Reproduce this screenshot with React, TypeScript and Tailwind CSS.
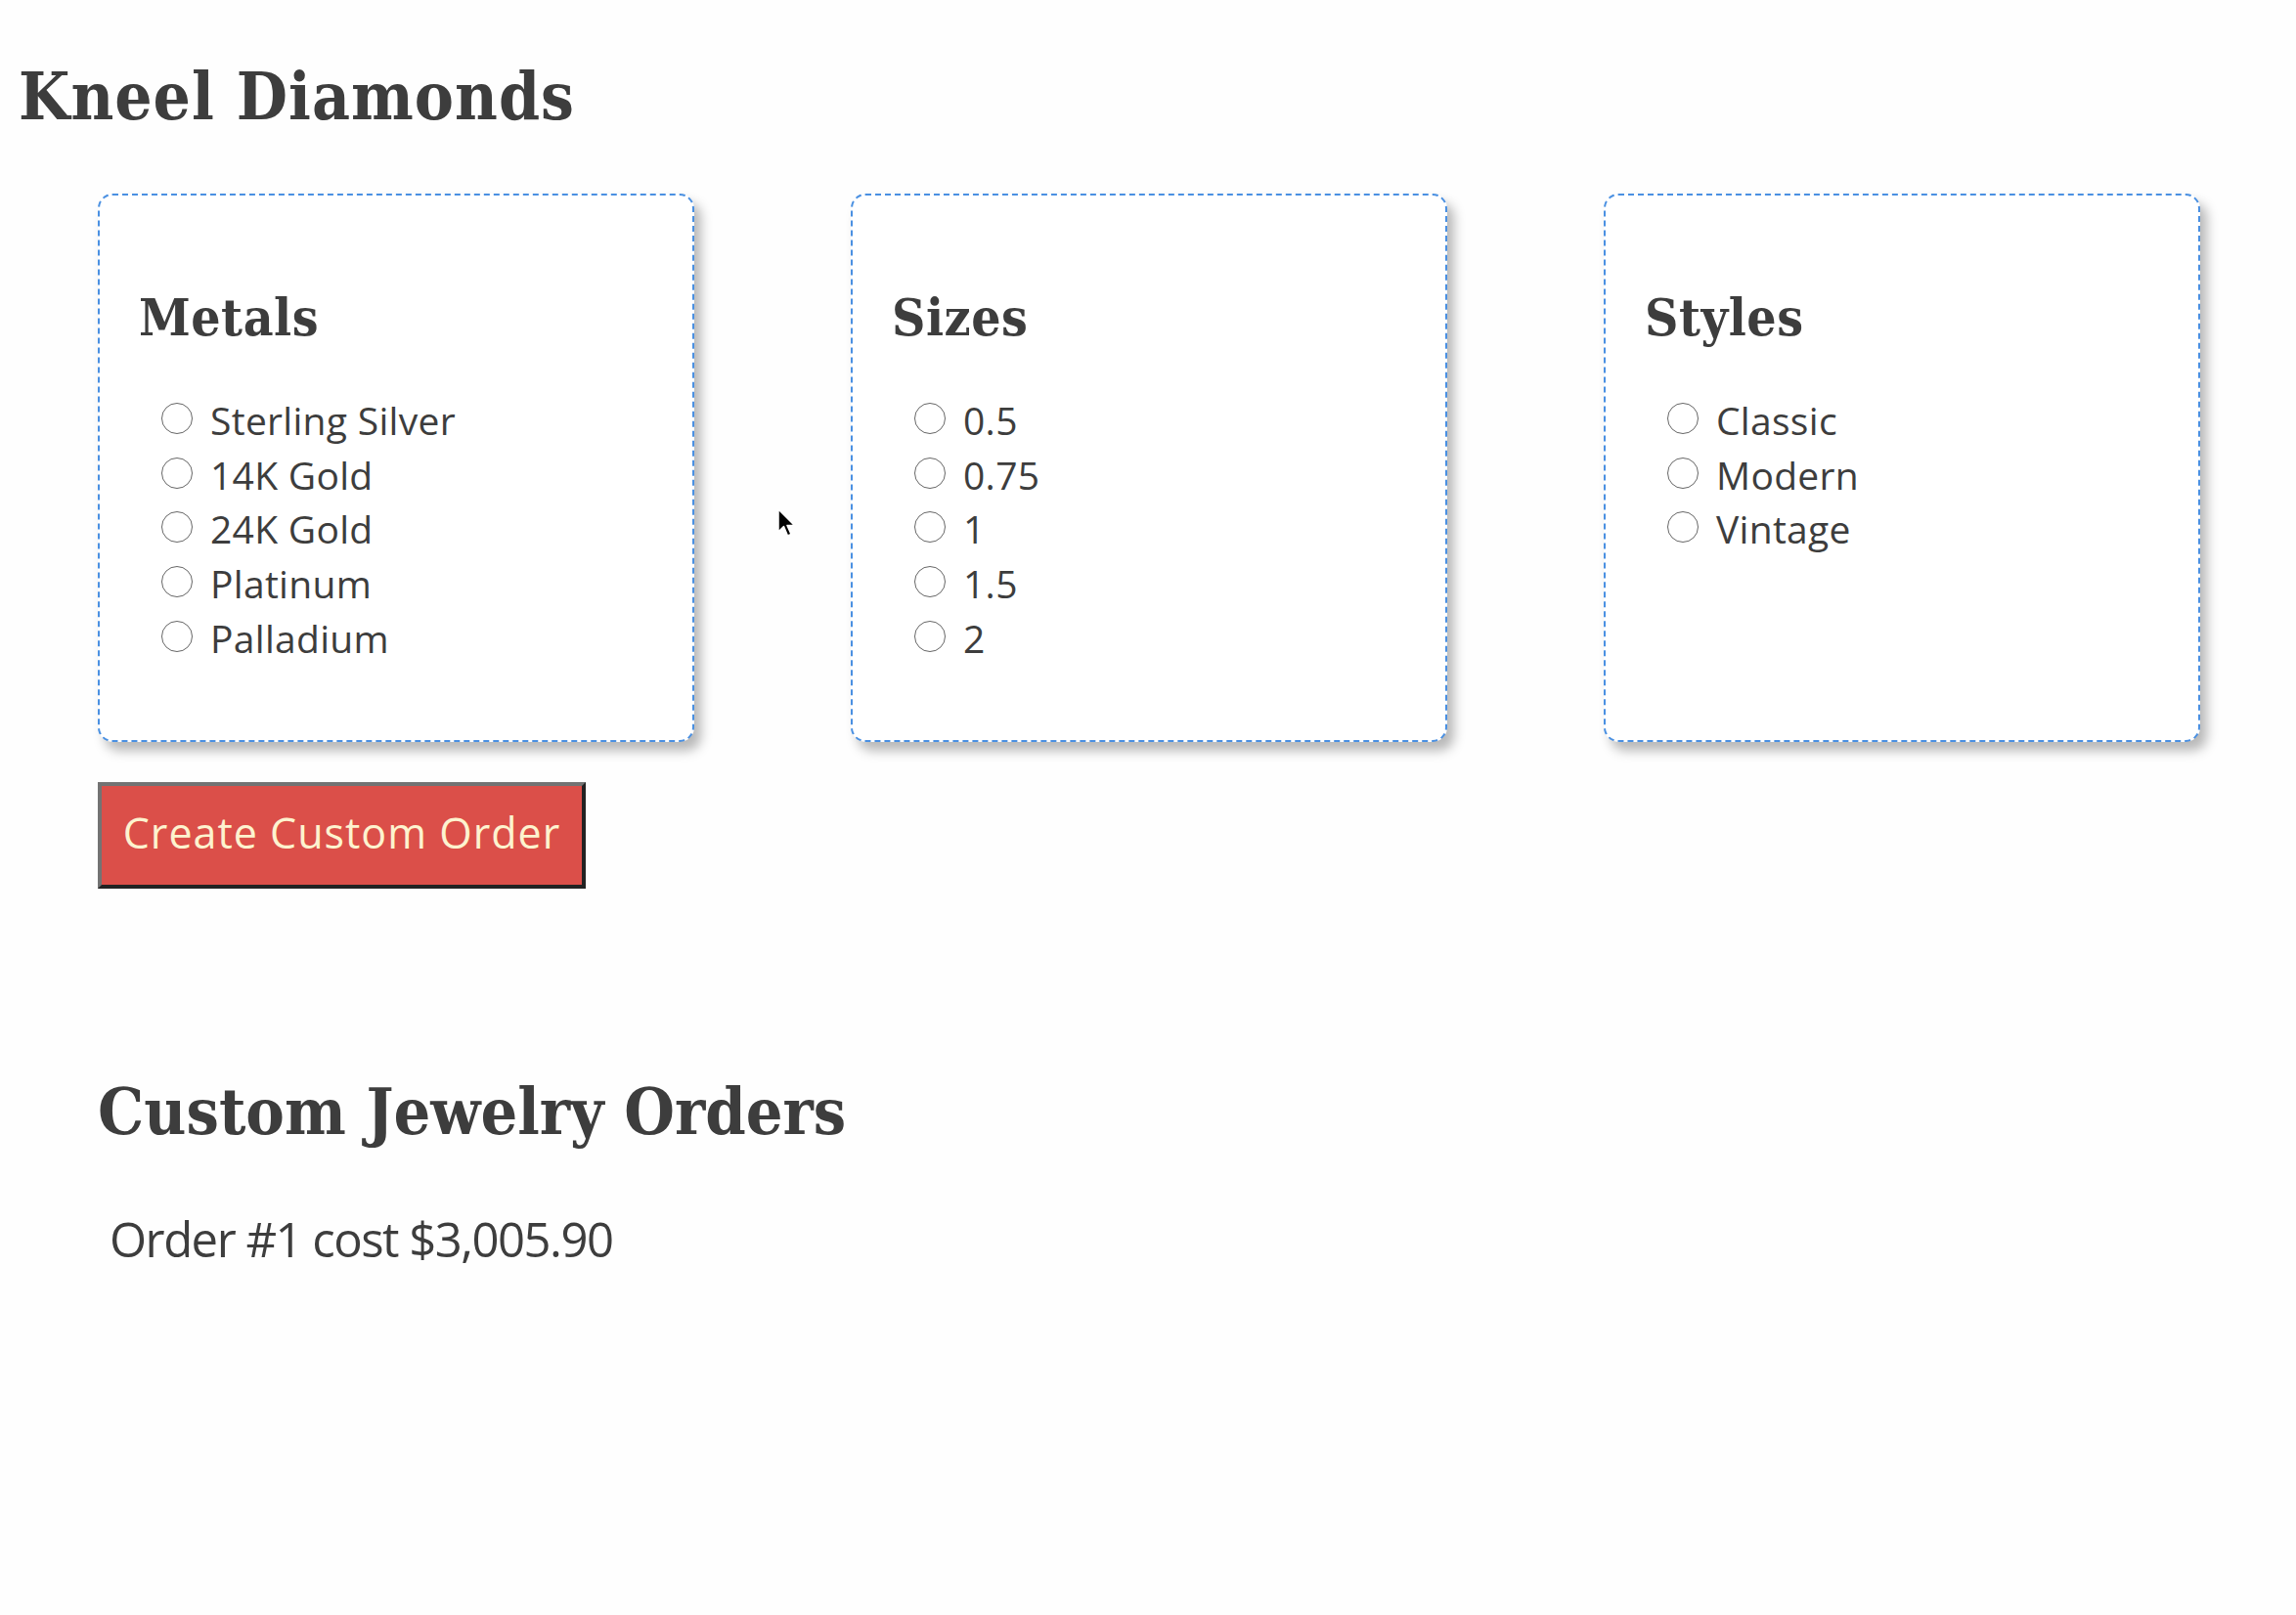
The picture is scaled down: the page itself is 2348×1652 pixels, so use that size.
import React from "react";

const serif = { fontFamily: '"DejaVu Serif Condensed", "DejaVu Serif", serif', fontStretch: "condensed" as const };
const sans = { fontFamily: '"Open Sans", "Noto Sans", sans-serif' };

function Radio({ label, name }: { label: string; name: string }) {
  return (
    <label className="flex items-center h-[55.7px] gap-[18px] cursor-default">
      <input
        type="radio"
        name={name}
        className="appearance-none w-[32px] h-[32px] rounded-full border-[1.5px] border-[#666666] bg-white shrink-0 m-0"
      />
      <span className="pt-[3px] text-[39px] leading-none tracking-[0.3px] text-[#3d3d3d]" style={sans}>
        {label}
      </span>
    </label>
  );
}

function Card({ title, items, name }: { title: string; items: string[]; name: string }) {
  return (
    <div className="w-[610px] h-[561px] rounded-[15px] border-2 border-dashed border-[#4a90e2] bg-white shadow-[7px_9px_12px_rgba(0,0,0,0.28)] pt-[98px] pl-[40px]">
      <h2 className="text-[53px] leading-none font-bold tracking-[0.5px] text-[#3d3d3d]" style={serif}>
        {title}
      </h2>
      <div className="mt-[49px] pl-[23px] flex flex-col">
        {items.map((it) => (
          <Radio key={it} label={it} name={name} />
        ))}
      </div>
    </div>
  );
}

export default function App() {
  return (
    <div className="relative min-h-[1652px] w-full bg-[#fefefe] text-[#3d3d3d]">
      <h1 className="pt-[65px] pl-[19px] text-[67px] leading-none font-bold tracking-[1px] text-[#3d3d3d]" style={serif}>
        Kneel Diamonds
      </h1>
      <div className="pl-[100px] pt-[66px]">
        <div className="flex gap-[160px]">
          <Card title="Metals" name="metal" items={["Sterling Silver", "14K Gold", "24K Gold", "Platinum", "Palladium"]} />
          <Card title="Sizes" name="size" items={["0.5", "0.75", "1", "1.5", "2"]} />
          <Card title="Styles" name="style" items={["Classic", "Modern", "Vintage"]} />
        </div>
        <button
          className="mt-[41px] w-[499px] h-[109px] pb-[6px] bg-[#db4f49] border-4 border-t-[#737373] border-l-[#737373] border-b-[#222222] border-r-[#222222] text-[43px] leading-none tracking-[1px] text-[#fdf3cf] text-center"
          style={sans}
        >
          Create Custom Order
        </button>
        <h2 className="mt-[195px] text-[66px] leading-none font-bold text-[#3d3d3d]" style={serif}>
          Custom Jewelry Orders
        </h2>
        <div className="mt-[73px] pl-[12px] text-[49px] leading-none tracking-[-1.5px] text-[#3d3d3d]" style={sans}>
          Order #1 cost $3,005.90
        </div>
      </div>
      <svg
        className="absolute left-[795px] top-[520px]"
        width="22"
        height="32"
        viewBox="0 0 22 32"
      >
        <path d="M1 1 L1 24 L6.5 18.5 L10.5 28 L14 26.5 L10 17.5 L17.5 17.5 Z" fill="#000" stroke="#fff" strokeWidth="1.5" strokeLinejoin="round" />
      </svg>
    </div>
  );
}
